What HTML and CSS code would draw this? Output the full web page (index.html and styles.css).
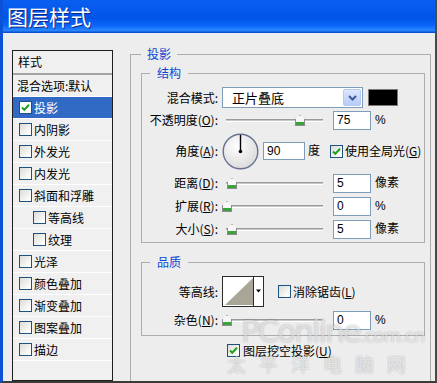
FILE: index.html
```html
<!DOCTYPE html>
<html lang="zh-CN">
<head>
  <meta charset="UTF-8">
  <title>图层样式</title>
  <link rel="stylesheet" href="styles.css">
</head>
<body>

<div class="window">
  <div class="titlebar">图层样式</div>

  <div class="content">
    <ul class="style-list">
      <li class="list-head">样式</li>
      <li class="plain">混合选项:默认</li>
      <li class="selected">
        <span class="cb white"><svg width="11" height="11" viewBox="0 0 11 11"><path d="M2 5.5 L4.3 7.8 L9 2.8" fill="none" stroke="#21a121" stroke-width="2"/></svg></span>投影
      </li>
      <li><span class="cb"></span>内阴影</li>
      <li><span class="cb"></span>外发光</li>
      <li><span class="cb"></span>内发光</li>
      <li><span class="cb"></span>斜面和浮雕</li>
      <li class="sub"><span class="cb"></span>等高线</li>
      <li class="sub"><span class="cb"></span>纹理</li>
      <li><span class="cb"></span>光泽</li>
      <li><span class="cb"></span>颜色叠加</li>
      <li><span class="cb"></span>渐变叠加</li>
      <li><span class="cb"></span>图案叠加</li>
      <li><span class="cb"></span>描边</li>
    </ul>

    <div class="settings">
      <fieldset class="group outer">
        <legend>投影</legend>

        <fieldset class="group inner">
          <legend>结构</legend>

          <div class="row row-mode">
            <span class="label">混合模式:</span>
            <div class="select">
              正片叠底
              <span class="drop"><svg width="9" height="6" viewBox="0 0 9 6"><path d="M1 1 L4.5 4.5 L8 1" fill="none" stroke="#3d5a9c" stroke-width="2"/></svg></span>
            </div>
            <span class="swatch"></span>
          </div>

          <div class="row row-opacity">
            <span class="label">不透明度(<u>O</u>):</span>
            <div class="slider"><span class="track"></span><span class="thumb" style="left: 73px"></span></div>
            <input class="num" type="text" value="75">
            <span class="unit">%</span>
          </div>

          <div class="row row-angle">
            <span class="label">角度(<u>A</u>):</span>
            <svg class="dial" width="37" height="37" viewBox="0 0 37 37">
              <defs>
                <radialGradient id="dialfill" cx="40%" cy="35%" r="70%">
                  <stop offset="0" stop-color="#ffffff"/>
                  <stop offset="1" stop-color="#d9d9d9"/>
                </radialGradient>
              </defs>
              <circle cx="18.5" cy="18.5" r="17.3" fill="url(#dialfill)" stroke="#66728f" stroke-width="1.4"/>
              <line x1="18.5" y1="18.5" x2="18.5" y2="2" stroke="#000" stroke-width="1.4"/>
              <circle cx="18.5" cy="18.5" r="1.8" fill="#000"/>
            </svg>
            <input class="num wide" type="text" value="90">
            <span class="unit">度</span>
            <span class="cb global"><svg width="11" height="11" viewBox="0 0 11 11"><path d="M2 5.5 L4.3 7.8 L9 2.8" fill="none" stroke="#21a121" stroke-width="2"/></svg></span>
            <span class="cb-text">使用全局光(<u>G</u>)</span>
          </div>

          <div class="row">
            <span class="label">距离(<u>D</u>):</span>
            <div class="slider"><span class="track"></span><span class="thumb" style="left: 5px"></span></div>
            <input class="num" type="text" value="5">
            <span class="unit">像素</span>
          </div>

          <div class="row">
            <span class="label">扩展(<u>R</u>):</span>
            <div class="slider"><span class="track"></span><span class="thumb" style="left: 0px"></span></div>
            <input class="num" type="text" value="0">
            <span class="unit">%</span>
          </div>

          <div class="row">
            <span class="label">大小(<u>S</u>):</span>
            <div class="slider"><span class="track"></span><span class="thumb" style="left: 5px"></span></div>
            <input class="num" type="text" value="5">
            <span class="unit">像素</span>
          </div>
        </fieldset>

        <fieldset class="group inner quality">
          <legend>品质</legend>

          <div class="row row-contour">
            <span class="label">等高线:</span>
            <svg class="contour" width="42" height="31" viewBox="0 0 42 31">
              <rect x="0.5" y="0.5" width="41" height="30" fill="#fff" stroke="#2b2b2b"/>
              <path d="M3 29 L31 2 L31 29 Z" fill="#aaa697"/>
              <line x1="31.5" y1="1" x2="31.5" y2="30" stroke="#2b2b2b"/>
              <path d="M34 13.5 h5 l-2.5 3 z" fill="#000"/>
            </svg>
            <span class="cb smooth"></span>
            <span class="cb-text">消除锯齿(<u>L</u>)</span>
          </div>

          <div class="row">
            <span class="label">杂色(<u>N</u>):</span>
            <div class="slider"><span class="track"></span><span class="thumb" style="left: 0px"></span></div>
            <input class="num" type="text" value="0">
            <span class="unit">%</span>
          </div>
        </fieldset>

        <div class="knockout">
          <span class="cb"><svg width="11" height="11" viewBox="0 0 11 11"><path d="M2 5.5 L4.3 7.8 L9 2.8" fill="none" stroke="#21a121" stroke-width="2"/></svg></span>
          <span class="cb-text">图层挖空投影(<u>U</u>)</span>
        </div>
      </fieldset>
    </div>
  </div>

  <div class="watermark">
    <div class="wm-line1">PConline<small>.com.cn</small></div>
    <div class="wm-line2">太平洋电脑网</div>
  </div>
</div>

</body>
</html>
```

FILE: styles.css
```css
* {
  box-sizing: border-box;
}

body {
  margin: 0;
  font-family: "Noto Sans CJK SC", sans-serif;
  font-size: 12px;
  color: #000;
}

.window {
  position: relative;
  width: 437px;
  height: 383px;
  overflow: hidden;
  background-color: #ededed;
  border-left: 3px solid #0b52d8;
  border-right: 2px solid #4a4a4a;
  border-bottom: 2px solid #3b3b3b;
}

.titlebar {
  height: 33px;
  padding-left: 4px;
  color: #fff;
  font-size: 21px;
  line-height: 33px;
  text-shadow: 1px 1px 0 #0c2a8a;
  background: linear-gradient(#0a5ff0 0%, #0055e8 55%, #0a66f8 78%, #2a86ff 92%, #0044c8 100%);
}

.content {
  display: flex;
  align-items: flex-start;
  gap: 17px;
  padding: 17px 0 0 9px;
}

/* left list */
.style-list {
  width: 101px;
  height: 331px;
  margin: 0;
  padding: 0;
  list-style: none;
  background-color: #f0f0f0;
  border: 1px solid #1e1e1e;
}

.style-list li {
  display: flex;
  align-items: center;
  gap: 2px;
  height: 22px;
  padding-left: 6px;
  line-height: 1;
  border-bottom: 1px solid #fff;
}

.style-list .list-head {
  height: 24px;
  padding-left: 5px;
  border-bottom: 2px solid #a4a4a4;
}

.style-list .plain {
  padding-left: 4px;
}

.style-list .sub {
  padding-left: 20px;
}

.style-list .selected {
  background-color: #316ac5;
  color: #fff;
}

.cb {
  display: inline-flex;
  align-items: center;
  justify-content: center;
  flex: none;
  width: 13px;
  height: 13px;
  border: 1px solid #1c5180;
  background: linear-gradient(135deg, #dcdcd5 0%, #fff 90%);
}

.cb.white {
  background: #fff;
}

/* right panel */
.settings {
  width: 301px;
  margin-top: -3px;
}

.group {
  margin: 0;
  min-width: 0;
  border: 1px solid #adadad;
}

.group legend {
  padding: 0 6px;
  color: #0a46d2;
  font-size: 12px;
  line-height: 14px;
}

.outer {
  padding: 0 5px 60px 10px;
}

.inner {
  margin-top: 5px;
  padding: 6px 0 3px 0;
}

.inner legend {
  margin-left: 8px;
  padding: 0 7px;
}

.quality {
  margin-top: 12px;
  padding: 7px 0 5px 0;
}

.row {
  display: flex;
  align-items: center;
  height: 20px;
  margin-top: 3px;
  line-height: 1;
}

.row-mode {
  height: 23px;
  margin-top: 0;
}

.row-opacity {
  margin-top: 1px;
}

.row-angle {
  height: 38px;
  margin-top: 2px;
}

.row-contour {
  height: 31px;
  margin-top: 0;
}

.label {
  flex: none;
  width: 76px;
  text-align: right;
}

.select {
  display: flex;
  align-items: center;
  width: 141px;
  height: 21px;
  margin-left: 4px;
  padding-left: 9px;
  font-size: 13px;
  background-color: #fff;
  border: 1px solid #7f9db9;
}

.drop {
  display: flex;
  align-items: center;
  justify-content: center;
  width: 18px;
  height: 17px;
  margin-left: auto;
  margin-right: 1px;
  background: linear-gradient(#dce7fe, #b6cbf6);
  border: 1px solid #b4c8f1;
  border-radius: 2px;
}

.swatch {
  width: 30px;
  height: 17px;
  margin-left: 5px;
  background-color: #000;
  border: 1px solid #7a7a7a;
}

.slider {
  position: relative;
  flex: none;
  width: 101px;
  height: 20px;
  margin-left: 4px;
}

.track {
  position: absolute;
  left: 4px;
  right: 0;
  top: 9px;
  height: 3px;
  background-color: #c8c8c8;
  border-top: 1px solid #9a9a9a;
  border-bottom: 1px solid #fff;
}

.thumb {
  position: absolute;
  top: 5px;
  width: 10px;
  height: 11px;
  background: linear-gradient(#f7f7f7 0 70%, #3aa33a 70% 100%);
  border: 1px solid #8c8c8c;
  clip-path: polygon(50% 0, 100% 40%, 100% 100%, 0 100%, 0 40%);
}

.num {
  flex: none;
  width: 38px;
  height: 19px;
  margin: 0 0 0 10px;
  padding: 0 0 0 3px;
  font-family: "Liberation Sans", sans-serif;
  font-size: 12px;
  color: #000;
  background-color: #fff;
  border: 1px solid #7f9db9;
  outline: none;
}

.num.wide {
  width: 42px;
  height: 18px;
  margin-left: 4px;
}

.unit {
  margin-left: 4px;
  font-family: "Liberation Sans", "Noto Sans CJK SC", sans-serif;
}

.row-angle .unit {
  margin-left: 3px;
}

.dial {
  flex: none;
  margin-left: 4px;
}

.global {
  margin-left: 10px;
}

.cb-text {
  margin-left: 2px;
}

.contour {
  flex: none;
  margin-left: 4px;
}

.smooth {
  margin-left: 14px;
}

.knockout {
  display: flex;
  align-items: center;
  height: 13px;
  margin-top: 8px;
  padding-left: 86px;
  line-height: 1;
}

.knockout .cb-text {
  margin-left: 3px;
}

/* watermark over the dialog */
.watermark {
  position: absolute;
  left: 238px;
  top: 314px;
  color: rgba(255, 255, 255, 0.55);
  text-shadow: 0 0 2px rgba(0, 0, 0, 0.28);
  pointer-events: none;
}

.wm-line1 {
  font-family: "DejaVu Sans", sans-serif;
  font-size: 31px;
  line-height: 34px;
  letter-spacing: -2px;
}

.wm-line1 small {
  font-size: 18px;
  letter-spacing: -1px;
}

.wm-line2 {
  margin-left: -14px;
  font-size: 19px;
  line-height: 22px;
  letter-spacing: 13px;
}
```
